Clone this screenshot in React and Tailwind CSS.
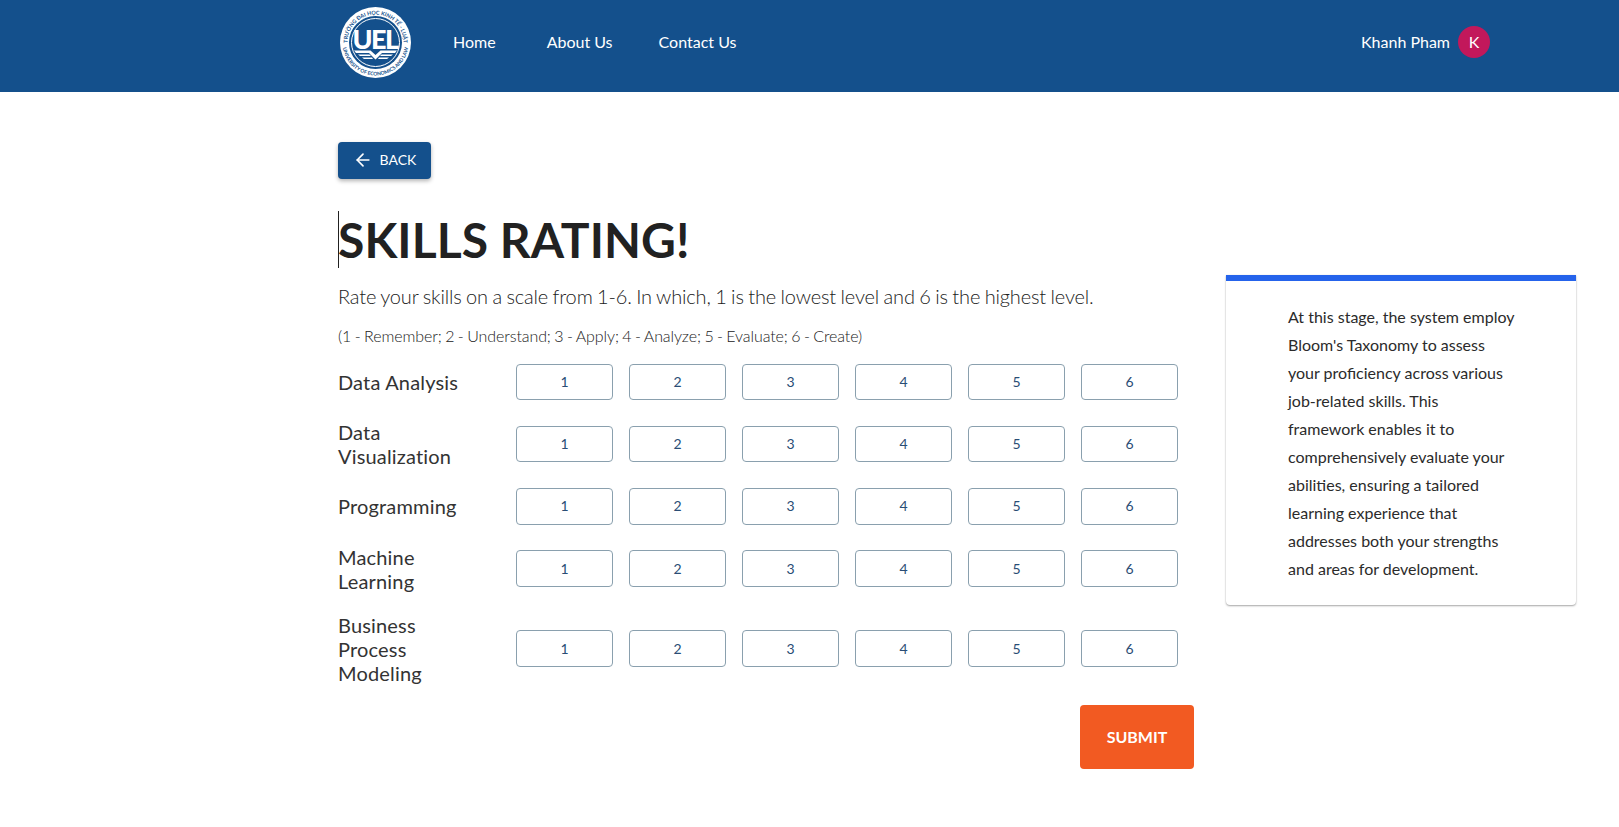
import React from "react";
import { ArrowLeft } from "lucide-react";

const skills = [
  "Data Analysis",
  "Data Visualization",
  "Programming",
  "Machine Learning",
  "Business Process Modeling",
];

const levels = [1, 2, 3, 4, 5, 6];

const Logo = () => (
  <svg width="71" height="71" viewBox="0 0 71 71" className="shrink-0 ml-[2px]">
    <defs>
      <path id="arcTop" d="M 9.2 45.1 A 28 28 0 1 1 61.8 45.1" />
      <path id="arcBottom" d="M 2.5 35.5 A 33 33 0 0 0 68.5 35.5" />
    </defs>
    <circle cx="35.5" cy="35.5" r="35.5" fill="#ffffff" />
    <circle cx="35.5" cy="35.5" r="26.5" fill="#14508c" />
    <circle cx="35.5" cy="35.5" r="24" fill="none" stroke="#ffffff" strokeWidth="1" />
    <text fontSize="5.4" fontWeight="700" fill="#14508c" fontFamily="Lato, sans-serif">
      <textPath href="#arcTop" startOffset="50%" textAnchor="middle">TRƯỜNG ĐẠI HỌC KINH TẾ - LUẬT</textPath>
    </text>
    <text fontSize="5" fontWeight="700" fill="#14508c" fontFamily="Lato, sans-serif">
      <textPath href="#arcBottom" startOffset="50%" textAnchor="middle">UNIVERSITY OF ECONOMICS AND LAW</textPath>
    </text>
    <text x="35" y="41.5" textAnchor="middle" fontSize="27" fontWeight="900" fill="#ffffff" fontFamily="Lato, sans-serif" letterSpacing="-1.5">UEL</text>
    <path d="M14 43.5 H30.5 L35.5 48 L40.5 43.5 H57 L55 46 H42 L35.5 52.5 L29 46 H16 Z" fill="#ffffff" />
    <path d="M18 47.5 H29.5 L31 49 H20 Z M53 47.5 H41.5 L40 49 H51 Z M22 50.5 H32 L33 52 H24 Z M49 50.5 H39 L38 52 H47 Z" fill="#ffffff" />
  </svg>
);

const Header = () => (
  <header className="h-[92px] bg-[#14508c] pb-[8px] pl-[338px] pr-[129px] flex items-center text-white text-base">
    <Logo />
    <nav className="flex items-center ml-[42px] gap-[46px]">
      <a className="mr-[5px]">Home</a>
      <a>About Us</a>
      <a>Contact Us</a>
    </nav>
    <div className="ml-auto flex items-center gap-[8px]">
      <span>Khanh Pham</span>
      <div className="w-8 h-8 rounded-full bg-[#c2185b] flex items-center justify-center">K</div>
    </div>
  </header>
);

const SkillRow = ({ name }) => (
  <div className="flex items-center">
    <div className="w-[146px] mr-[32px] text-xl leading-6 tracking-[0.17px] text-[#333333]">{name}</div>
    <div className="flex gap-[16px]">
      {levels.map((n) => (
        <button
          key={n}
          className="w-[97px] h-[36.25px] bg-white border border-[#8aa0ae] rounded text-sm text-[#2a4d75]"
        >
          {n}
        </button>
      ))}
    </div>
  </div>
);

export default function App() {
  return (
    <div className="min-h-[827px] bg-white font-['Lato',sans-serif]">
      <Header />
      <div className="flex pl-[338px] pt-[50px]">
        <main className="w-[856px]">
          <button className="w-[93px] h-[37px] pb-[2px] flex items-center justify-center gap-[7px] rounded bg-[#14508c] text-white text-sm shadow-[0_2px_4px_rgba(0,0,0,0.3)]">
            <ArrowLeft size={20} strokeWidth={2} />
            BACK
          </button>
          <h1 className="mt-[32px] h-[57px] border-l border-[#212121] indent-[-1px] tracking-[0.07px] text-[48px] leading-[57px] font-bold text-[#212121]">
            SKILLS RATING!
          </h1>
          <p className="mt-[14px] text-xl leading-7 font-light tracking-[-0.15px] [word-spacing:-0.8px] text-[#212121]">
            Rate your skills on a scale from 1-6. In which, 1 is the lowest level and 6 is the highest level.
          </p>
          <p className="mt-[14px] text-base leading-6 font-light tracking-[-0.09px] [word-spacing:-0.77px] text-[#212121]">
            (1 - Remember; 2 - Understand; 3 - Apply; 4 - Analyze; 5 - Evaluate; 6 - Create)
          </p>
          <div className="mt-[16px] flex flex-col gap-[20px]">
            {skills.map((s) => (
              <SkillRow key={s} name={s} />
            ))}
          </div>
          <div className="mt-[20.5px] flex justify-end">
            <button className="w-[114px] h-[64px] rounded bg-[#f25a22] text-white text-base font-bold">
              SUBMIT
            </button>
          </div>
        </main>
        <aside className="ml-[32px] mt-[133px] w-[350px] h-[330px] border-t-[6px] border-[#2563eb] rounded-b bg-white shadow-[0_1px_2px_rgba(0,0,0,0.35),0_0_1px_rgba(0,0,0,0.12)] pt-[22px] pl-[62px] pr-[60px] text-base leading-7 text-[#2b2b2b]">
          At this stage, the system employ Bloom's Taxonomy to assess your proficiency across various job-related skills. This framework enables it to comprehensively evaluate your abilities, ensuring a tailored learning experience that addresses both your strengths and areas for development.
        </aside>
      </div>
    </div>
  );
}
